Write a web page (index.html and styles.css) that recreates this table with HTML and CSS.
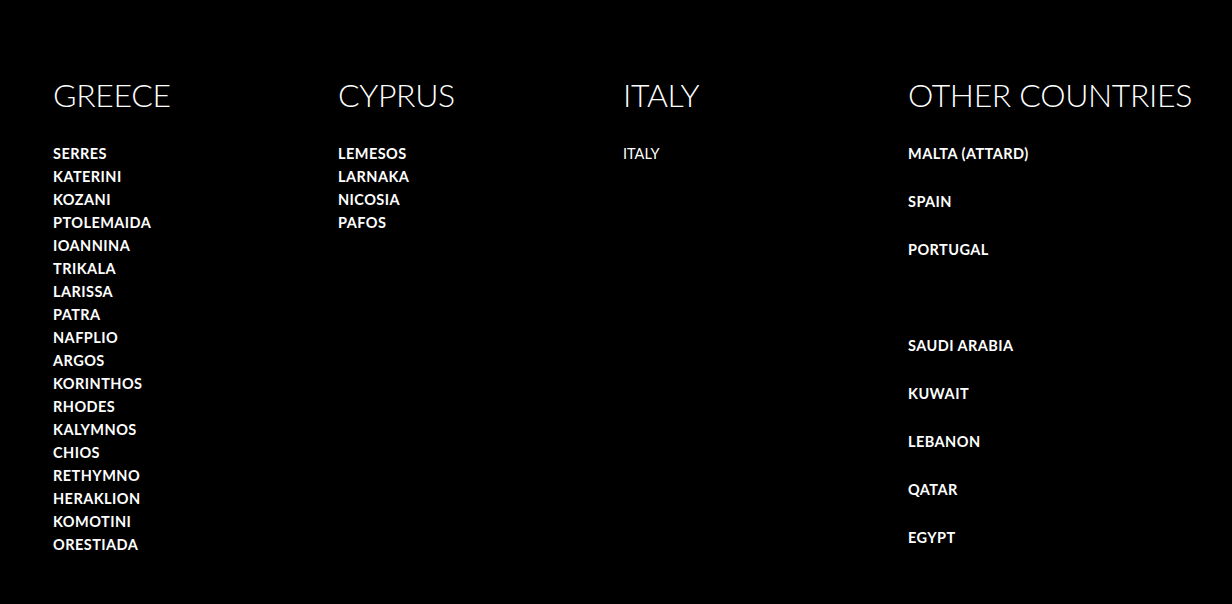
FILE: index.html
```html
<!DOCTYPE html>
<html>
<head>
<meta charset="utf-8">
<link rel="stylesheet" href="styles.css">
</head>
<body>
<div class="page">
  <section class="col">
    <h2 class="title">GREECE</h2>
    <ul class="list">
      <li>SERRES</li><li>KATERINI</li><li>KOZANI</li><li>PTOLEMAIDA</li><li>IOANNINA</li><li>TRIKALA</li><li>LARISSA</li><li>PATRA</li><li>NAFPLIO</li><li>ARGOS</li><li>KORINTHOS</li><li>RHODES</li><li>KALYMNOS</li><li>CHIOS</li><li>RETHYMNO</li><li>HERAKLION</li><li>KOMOTINI</li><li>ORESTIADA</li>
    </ul>
  </section>
  <section class="col">
    <h2 class="title">CYPRUS</h2>
    <ul class="list">
      <li>LEMESOS</li><li>LARNAKA</li><li>NICOSIA</li><li>PAFOS</li>
    </ul>
  </section>
  <section class="col">
    <h2 class="title">ITALY</h2>
    <ul class="list">
      <li class="regular">ITALY</li>
    </ul>
  </section>
  <section class="col">
    <h2 class="title">OTHER COUNTRIES</h2>
    <ul class="list wide">
      <li>MALTA (ATTARD)</li><li>SPAIN</li><li>PORTUGAL</li><li class="empty"></li><li>SAUDI ARABIA</li><li>KUWAIT</li><li>LEBANON</li><li>QATAR</li><li>EGYPT</li>
    </ul>
  </section>
</div>
</body>
</html>
```
FILE: styles.css
```css
html, body {
  margin: 0;
  padding: 0;
  background: #000;
  color: #fff;
  font-family: Lato, "Open Sans", sans-serif;
}
.page {
  display: grid;
  grid-template-columns: repeat(4, 285px);
  padding: 77px 0 0 53px;
}
.title {
  margin: 0;
  font-size: 32px;
  line-height: 36px;
  font-weight: 300;
  letter-spacing: -0.35px;
  white-space: nowrap;
}
.list {
  list-style: none;
  margin: 29px 0 0;
  padding: 0;
}
.list li {
  font-size: 14.5px;
  line-height: 23px;
  font-weight: 700;
  height: 23px;
  letter-spacing: 0.45px;
}
.list.wide li {
  height: 48px;
}
.list li.regular {
  font-weight: 400;
  letter-spacing: 0;
}
```
